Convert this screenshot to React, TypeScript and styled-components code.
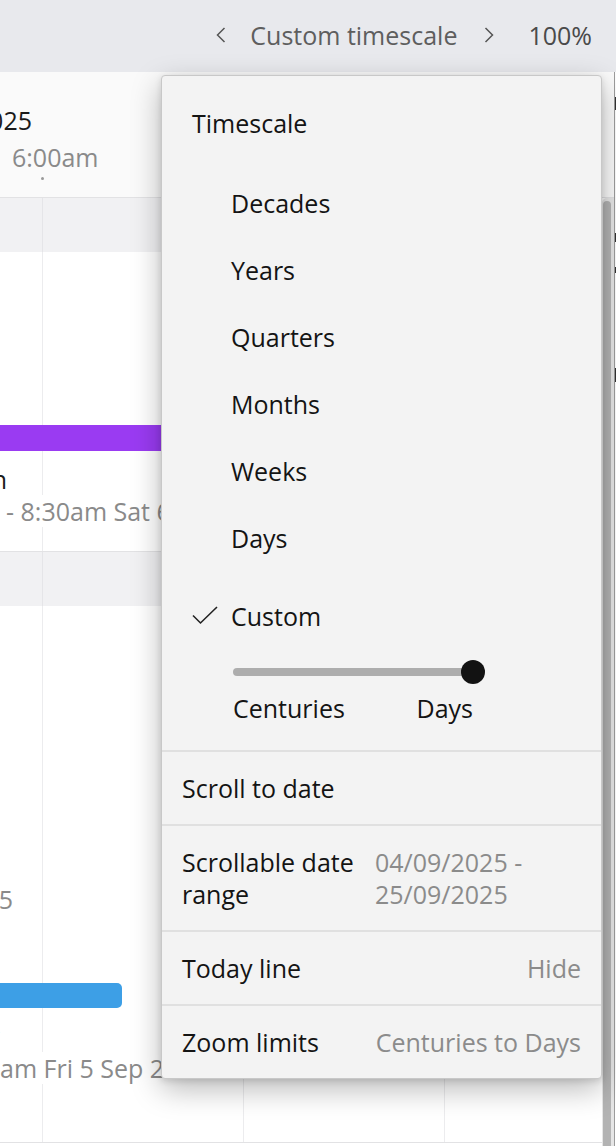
import React from "react";
import styled, { createGlobalStyle } from "styled-components";

const GlobalStyle = createGlobalStyle`
  html, body {
    margin: 0;
    padding: 0;
    height: 100%;
    overflow: hidden;
  }
  body {
    font-family: "Open Sans", "Noto Sans", sans-serif;
    background: #ffffff;
  }
  #root {
    height: 100%;
  }
`;

const timescales = ["Decades", "Years", "Quarters", "Months", "Weeks", "Days"];

const settings = [
  { label: "Scroll to date" },
  { label: "Scrollable date range", value: "04/09/2025 - 25/09/2025" },
  { label: "Today line", value: "Hide" },
  { label: "Zoom limits", value: "Centuries to Days" },
];

// bits of the neighbouring panel peeking in at the right edge
const railMarks = [
  { gap: 25, h: 13 },
  { gap: 123, h: 9 },
  { gap: 25, h: 6 },
  { gap: 95, h: 14 },
];

const Chevron = ({ dir }: { dir: "left" | "right" }) => (
  <svg width="10" height="16" viewBox="0 0 10 16">
    <path
      d={dir === "left" ? "M8.5 1 1.5 8l7 7" : "M1.5 1l7 7-7 7"}
      fill="none"
      stroke="#555"
      strokeWidth="1.5"
    />
  </svg>
);

const CheckIcon = () => (
  <svg width="26" height="19" viewBox="0 0 26 19">
    <path d="M1 9.5 8.5 17 25 1" fill="none" stroke="#222" strokeWidth="1.6" />
  </svg>
);

const App = () => {
  return (
    <>
      <GlobalStyle />
      <Page>
        <TopBar>
          <Chevron dir="left" />
          <ScaleName>Custom timescale</ScaleName>
          <NextButton>
            <Chevron dir="right" />
          </NextButton>
          <ZoomLevel>100%</ZoomLevel>
        </TopBar>

        <Workspace>
          <Timeline>
            <HeaderRow>
              <Clipped $end={32}>
                <DateText>Thu 4 Sep 2025</DateText>
              </Clipped>
              <TimeText>6:00am</TimeText>
              <Tick />
            </HeaderRow>

            <Body>
              <Grid>
                <Band />
                <Lane $height={300} $pad={173}>
                  <EventBar $color="#9a3bf2" $width={300} $height={26} />
                  <Clipped $end={7} $gap={12}>
                    <Title>Design session</Title>
                  </Clipped>
                  <Sub $indent={6}>- 8:30am Sat 6 Sep 2025</Sub>
                </Lane>
                <Band />
                <Lane $height={537} $pad={277}>
                  <Clipped $end={13}>
                    <Sub>Fri 5 Sep 2025</Sub>
                  </Clipped>
                  <EventBar $color="#3d9fe6" $width={122} $height={25} $gap={68} $round />
                  <Clipped $end={0} $gap={12}>
                    <Title>Review</Title>
                  </Clipped>
                  <Sub>am Fri 5 Sep 2025</Sub>
                </Lane>
              </Grid>
              <ScrollTrack>
                <ScrollThumb />
              </ScrollTrack>
            </Body>
          </Timeline>

          <EdgeRail>
            {railMarks.map((m, i) => (
              <RailMark key={i} $gap={m.gap} $h={m.h} />
            ))}
          </EdgeRail>
        </Workspace>

        <Menu>
          <TimescaleSection>
            <SectionTitle>Timescale</SectionTitle>
            {timescales.map((t) => (
              <Option key={t}>
                <CheckSlot />
                {t}
              </Option>
            ))}
            <Option $spaced>
              <CheckSlot>
                <CheckIcon />
              </CheckSlot>
              Custom
            </Option>
            <Slider>
              <SliderTrack />
              <SliderThumb />
            </Slider>
            <SliderLabels>
              <span>Centuries</span>
              <span>Days</span>
            </SliderLabels>
          </TimescaleSection>

          {settings.map((s) => (
            <SettingRow key={s.label}>
              <SettingLabel>{s.label}</SettingLabel>
              {s.value && <SettingValue>{s.value}</SettingValue>}
            </SettingRow>
          ))}
        </Menu>
      </Page>
    </>
  );
};

export default App;

const Page = styled.div`
  position: relative;
  width: 616px;
  height: 1146px;
  display: flex;
  flex-direction: column;
  overflow: hidden;
  font-size: 25px;
  line-height: 32px;
`;

const TopBar = styled.div`
  height: 72px;
  flex-shrink: 0;
  box-sizing: border-box;
  display: flex;
  align-items: center;
  justify-content: flex-end;
  padding: 0 24px 3px 0;
  background: #e8e9ed;
`;

const ScaleName = styled.span`
  margin-left: 24px;
  color: #5e5e5e;
`;

const NextButton = styled.span`
  display: flex;
  margin-left: 27px;
`;

const ZoomLevel = styled.span`
  margin-left: 34px;
  color: #4a4a4a;
`;

const Workspace = styled.div`
  flex: 1;
  display: flex;
  min-height: 0;
`;

const Timeline = styled.div`
  width: 614px;
  display: flex;
  flex-direction: column;
  overflow: hidden;
`;

const HeaderRow = styled.div`
  height: 126px;
  flex-shrink: 0;
  box-sizing: border-box;
  padding-top: 32px;
  background: #fafafa;
  border-bottom: 1px solid #e2e2e4;
  display: flex;
  flex-direction: column;
`;

const Clipped = styled.div<{ $end: number; $gap?: number }>`
  width: ${(p) => p.$end}px;
  margin-top: ${(p) => p.$gap || 0}px;
  display: flex;
  justify-content: flex-end;
  white-space: nowrap;
`;

const DateText = styled.span`
  color: #1a1a1a;
`;

const TimeText = styled.div`
  margin: 5px 0 0 12px;
  color: #8a8a8a;
`;

const Tick = styled.div`
  width: 3px;
  height: 3px;
  border-radius: 50%;
  background: #999;
  margin: 4px 0 0 41px;
`;

const Body = styled.div`
  flex: 1;
  display: flex;
  min-height: 0;
`;

const Grid = styled.div`
  flex: 1;
  display: flex;
  flex-direction: column;
  overflow: hidden;
  background: #fff;
`;

const Band = styled.div`
  height: 54px;
  flex-shrink: 0;
  background-color: #f1f1f3;
  background-image: linear-gradient(90deg, #e5e5e8 0 1px, transparent 1px);
  background-size: 201px 100%;
  background-position: 42px 0;
`;

const Lane = styled.div<{ $height: number; $pad: number }>`
  height: ${(p) => p.$height}px;
  flex-shrink: 0;
  box-sizing: border-box;
  padding-top: ${(p) => p.$pad}px;
  border-bottom: 1px solid #e2e2e4;
  background-color: #fff;
  background-image: linear-gradient(90deg, #ececee 0 1px, transparent 1px);
  background-size: 201px 100%;
  background-position: 42px 0;
  display: flex;
  flex-direction: column;
`;

const EventBar = styled.div<{
  $color: string;
  $width: number;
  $height: number;
  $gap?: number;
  $round?: boolean;
}>`
  width: ${(p) => p.$width}px;
  height: ${(p) => p.$height}px;
  margin-top: ${(p) => p.$gap || 0}px;
  background: ${(p) => p.$color};
  border-radius: ${(p) => (p.$round ? "0 5px 5px 0" : "0")};
`;

const Title = styled.span`
  color: #1a1a1a;
`;

const Sub = styled.div<{ $indent?: number }>`
  width: max-content;
  padding-left: ${(p) => p.$indent || 0}px;
  white-space: nowrap;
  color: #8a8a8a;
  background: #fff;
`;

const ScrollTrack = styled.div`
  width: 12px;
  flex-shrink: 0;
  box-sizing: border-box;
  padding: 3px 1px 0 1px;
  background: #e6e6e6;
  border-radius: 5px 0 0 0;
  display: flex;
`;

const ScrollThumb = styled.div`
  width: 8px;
  height: 100%;
  background: #b3b3b3;
  border-radius: 4px 4px 0 0;
`;

const EdgeRail = styled.div`
  width: 1px;
  flex-shrink: 0;
  border-left: 1px solid #9c9c9c;
  background: #fff;
  display: flex;
  flex-direction: column;
`;

const RailMark = styled.div<{ $gap: number; $h: number }>`
  height: ${(p) => p.$h}px;
  margin-top: ${(p) => p.$gap}px;
  background: #333;
`;

const Menu = styled.div`
  position: absolute;
  top: 75px;
  left: 161px;
  width: 441px;
  box-sizing: border-box;
  background: #f3f3f3;
  border: 1px solid #c8c8c8;
  border-radius: 4px;
  box-shadow: 0 10px 30px rgba(0, 0, 0, 0.28), 0 2px 6px rgba(0, 0, 0, 0.12);
  color: #141414;
`;

const TimescaleSection = styled.div`
  padding: 13px 20px 26px 30px;
  display: flex;
  flex-direction: column;
`;

const SectionTitle = styled.div`
  height: 67px;
  margin-bottom: 13px;
  display: flex;
  align-items: center;
`;

const Option = styled.div<{ $spaced?: boolean }>`
  height: 67px;
  margin-top: ${(p) => (p.$spaced ? "11px" : "0")};
  display: flex;
  align-items: center;
`;

const CheckSlot = styled.span`
  width: 39px;
  flex-shrink: 0;
  display: flex;
  align-items: center;
`;

const Slider = styled.div`
  position: relative;
  width: 240px;
  height: 24px;
  margin: 11px 0 0 41px;
  display: flex;
  align-items: center;
`;

const SliderTrack = styled.div`
  width: 100%;
  height: 8px;
  border-radius: 4px;
  background: #adadad;
`;

const SliderThumb = styled.div`
  position: absolute;
  right: -12px;
  top: 0;
  width: 24px;
  height: 24px;
  border-radius: 50%;
  background: #121212;
`;

const SliderLabels = styled.div`
  width: 240px;
  margin: 8px 0 0 41px;
  display: flex;
  justify-content: space-between;
`;

const SettingRow = styled.div`
  border-top: 2px solid #e0e0e0;
  padding: 20px;
  display: flex;
  align-items: flex-start;
`;

const SettingLabel = styled.div``;

const SettingValue = styled.div`
  margin-left: auto;
  max-width: 206px;
  flex-shrink: 0;
  color: #8b8b8b;
`;
